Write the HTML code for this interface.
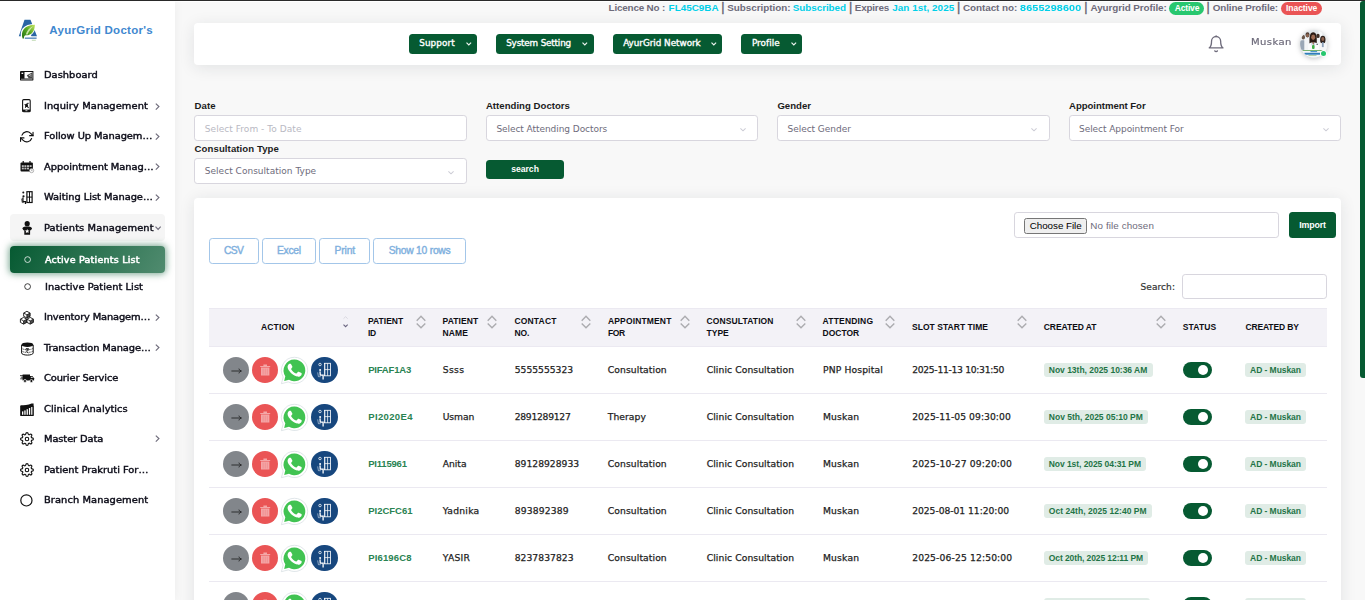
<!DOCTYPE html>
<html lang="en"><head><meta charset="utf-8"><title>Active Patients List - AyurGrid Doctor's</title>
<style>
html,body{margin:0;padding:0}
body{width:1365px;height:600px;overflow:hidden;background:#f8f8f8;font-family:"Liberation Sans",sans-serif;position:relative;color:#222}
#app{position:absolute;left:0;top:0;width:1365px;height:600px;overflow:hidden}
.t{position:absolute;white-space:pre;line-height:1;margin:0;padding:0}
.d{font-family:"DejaVu Sans","Liberation Sans",sans-serif}
.a{position:absolute;box-sizing:border-box}
.card{background:#fff;border-radius:4px;box-shadow:0 2.7px 16px 0 rgba(34,41,47,.1)}
.btn{background:#065a32;border-radius:3.5px}
.inp{background:#fff;border:1px solid #d8d6de;border-radius:3.2px}
.ob{border:1px solid #a3c6e9;border-radius:3.3px;background:#fff}
.hl{height:1px;background:#ebe9f1;left:209px;width:1118px}
.bdg{background:#e0ece6;border-radius:3px;height:13.4px}
.tg{width:29px;height:16px;border-radius:8px;background:#065a32;left:1182.8px}
.tg i{position:absolute;left:15.6px;top:3px;width:10px;height:10px;border-radius:50%;background:#fff}
svg{position:absolute;overflow:visible}
</style></head>
<body><div id="app">
<!-- page chrome -->
<div class="a" style="left:0;top:0;width:1365px;height:1px;background:#2a2a2a"></div>
<div class="a" style="left:0;top:1px;width:1365px;height:1px;background:#fff"></div>

<!-- SIDEBAR -->
<aside class="a" style="left:0;top:1px;width:175px;height:599px;background:#fff;box-shadow:0 0 10px 0 rgba(34,41,47,.05)"></aside>
<div class="a" style="left:10px;top:214px;width:155px;height:27px;background:#f5f5f5;border-radius:4px"></div>
<div class="a" style="left:10px;top:246px;width:155px;height:27px;border-radius:4px;background:linear-gradient(118deg,#065a32,rgba(6,90,50,.7));box-shadow:0 0 7px 1px rgba(6,90,50,.55)"></div>
<svg style="left:17px;top:18px" width="22" height="25" viewBox="17 18 22 25">
<defs><linearGradient id="lg" x1="0.1" y1="0.9" x2="0.95" y2="0.05"><stop offset="0" stop-color="#2c7a16"/><stop offset="0.5" stop-color="#58a825"/><stop offset="1" stop-color="#b9df58"/></linearGradient><filter id="lb"><feGaussianBlur stdDeviation=".25"/></filter></defs>
<g filter="url(#lb)">
<path d="M24.500 19.800H30.500L37 36.200H31.400L27.500 25.200L23.400 36.200H18.800Z" fill="#2a65a4"/>
<path d="M21.600 39C18.600 30 23.500 23.600 35.900 23.900C35.700 31.800 31.800 36.400 26 36.200C24.800 36.200 24.300 37.200 24.500 38.900Z" fill="#fff"/>
<path d="M22.600 38.600C20.300 31 24.400 25 34.900 24.700C34.700 31.300 31.400 35.500 25.900 35.300C24.500 35.300 23.700 36.600 24 38.500Z" fill="url(#lg)"/>
<path d="M25.800 34.600C26.600 30.600 29.300 27.600 33.600 25.900C31 28.300 28.900 31 27.600 34.500Z" fill="#e4f4c4" opacity=".8"/>
<rect x="24.800" y="37.400" width="11.800" height="1.600" fill="#3a74b0" opacity=".75"/>
<rect x="31.800" y="39.800" width="4" height=".8" fill="#6aa84a" opacity=".55"/>
</g></svg>
<svg style="left:20.100px;top:71px" width="13.400" height="9.600" viewBox="0 0 13.400 9.600"><rect x="0" y="0" width="13.400" height="9.600" rx="0.500" fill="#111"/><rect x="4.500" y="1" width="8" height="6.500" fill="#fff"/><path d="M6.800 4.300L12.500 1.200V7.500H8.800Z" fill="#4a4a4a"/><path d="M8.600 4.300L11.400 2.900V5.700Z" fill="#e8e8e8"/><path d="M9.700 4.300L11.400 3.600V5Z" fill="#333"/><rect x="1.500" y="1.700" width="1.700" height="1.300" fill="#fff"/><rect x="1" y="7.700" width="11.500" height="1.100" fill="#8a8a8a"/></svg>
<svg style="left:22.200px;top:99px" width="8.800" height="13.400" viewBox="0 0 8.800 13.400"><rect x="0.600" y="0.600" width="7.600" height="12.200" rx="1.100" fill="#fff" stroke="#111" stroke-width="1.100"/><rect x="0.600" y="10.600" width="7.600" height="2.200" fill="#111"/><rect x="3.400" y="11.400" width="2" height=".7" fill="#fff"/><path d="M2.600 5.400l3.400 1.200M6.400 3.800L4.300 6.400l-1 2.400M4.300 6.400l2.300 2.400M4.400 4.600l.2 1.800" fill="none" stroke="#111" stroke-width="1.050"/><circle cx="4.300" cy="6.600" r="1.150" fill="#111"/></svg>
<svg style="left:20.200px;top:129.800px" width="13.600" height="13.600" viewBox="0 0 24 24" fill="none" stroke="#111" stroke-width="2" stroke-linecap="round" stroke-linejoin="round"><polyline points="23 4 23 10 17 10"/><polyline points="1 20 1 14 7 14"/><path d="M3.510 9a9 9 0 0 1 14.850-3.360L23 10M1 14l4.640 4.360A9 9 0 0 0 20.490 15"/></svg>
<svg style="left:20px;top:161px" width="14" height="12" viewBox="0 0 14 12"><rect x="0.500" y="1.400" width="12.400" height="9.200" rx="1" fill="#111"/><rect x="2.600" y="0" width="1.200" height="2.400" fill="#111"/><rect x="9.400" y="0" width="1.200" height="2.400" fill="#111"/><g fill="#bbb"><rect x="1.800" y="4.200" width="2" height="1.800"/><rect x="4.400" y="4.200" width="2" height="1.800"/><rect x="7" y="4.200" width="2" height="1.800"/><rect x="9.600" y="4.200" width="2" height="1.800"/><rect x="1.800" y="6.600" width="2" height="1.800"/><rect x="4.400" y="6.600" width="2" height="1.800"/><rect x="7" y="6.600" width="2" height="1.800"/></g><circle cx="11.600" cy="9.600" r="2.100" fill="#fff" stroke="#888" stroke-width=".6"/><path d="M11.600 8.400v1.300h.9" fill="none" stroke="#666" stroke-width=".5"/></svg>
<svg style="left:21px;top:190.600px" width="12" height="13.400" viewBox="0 0 12 13.400"><circle cx="2.300" cy="1.500" r="1" fill="#111"/><circle cx="2.500" cy="5.300" r="1.100" fill="#111"/><path d="M1.900 6.600v4h2.600v2.400" fill="none" stroke="#111" stroke-width="1.300"/><path d="M0.400 7.600l.8 4h1.600" fill="none" stroke="#111" stroke-width=".6"/><rect x="5.900" y="0.700" width="5.200" height="10.800" fill="none" stroke="#111" stroke-width="1.200"/><path d="M8.500 0.700v10.800M5.900 6.100h5.200" stroke="#111" stroke-width="1"/></svg>
<svg style="left:22px;top:221px" width="10.400" height="14" viewBox="0 0 10.400 14"><circle cx="5.200" cy="2.700" r="2.600" fill="#111"/><path d="M0.300 7.200C1.500 6 3 5.600 5.200 5.600s3.700.4 4.900 1.600L9 9.200H8.100V13.800H2.300V9.200H1.400Z" fill="#111"/><path d="M5.200 8l.7 1.400 1.500.2-1.100 1 .3 1.500-1.400-.8-1.400.8.300-1.500-1.100-1 1.500-.2z" fill="#fff"/></svg>
<svg style="left:24.300px;top:256.200px" width="7.200" height="7.200" viewBox="0 0 7.200 7.200"><circle cx="3.600" cy="3.600" r="2.900" fill="none" stroke="#fff" stroke-width=".75"/></svg>
<svg style="left:24.300px;top:283.300px" width="7.200" height="7.200" viewBox="0 0 7.200 7.200"><circle cx="3.600" cy="3.600" r="2.900" fill="none" stroke="#111" stroke-width=".8"/></svg>
<svg style="left:20px;top:310.600px" width="14" height="14" viewBox="0 0 14 14"><path d="M3.7 2.06L6.9 0.3L10.100000000000001 2.06V5.292000000000001L6.9 7.0200000000000005L3.7 5.292000000000001Z" fill="#fff" stroke="#111" stroke-width=".9" stroke-linejoin="miter"/><path d="M6.9 3.8200000000000003V7.0200000000000005M3.7 2.06L6.9 3.8200000000000003L10.100000000000001 2.06" fill="none" stroke="#111" stroke-width=".8"/><path d="M6.9 3.8200000000000003L10.100000000000001 2.06V5.292000000000001L6.9 7.0200000000000005Z" fill="#111" opacity=".75"/><path d="M0.4 8.16L3.6 6.4L6.800000000000001 8.16V11.392000000000001L3.6 13.120000000000001L0.4 11.392000000000001Z" fill="#fff" stroke="#111" stroke-width=".9" stroke-linejoin="miter"/><path d="M3.6 9.920000000000002V13.120000000000001M0.4 8.16L3.6 9.920000000000002L6.800000000000001 8.16" fill="none" stroke="#111" stroke-width=".8"/><path d="M3.6 9.920000000000002L6.800000000000001 8.16V11.392000000000001L3.6 13.120000000000001Z" fill="#111" opacity=".75"/><path d="M7 8.16L10.2 6.4L13.4 8.16V11.392000000000001L10.2 13.120000000000001L7 11.392000000000001Z" fill="#fff" stroke="#111" stroke-width=".9" stroke-linejoin="miter"/><path d="M10.2 9.920000000000002V13.120000000000001M7 8.16L10.2 9.920000000000002L13.4 8.16" fill="none" stroke="#111" stroke-width=".8"/><path d="M10.2 9.920000000000002L13.4 8.16V11.392000000000001L10.2 13.120000000000001Z" fill="#111" opacity=".75"/></svg>
<svg style="left:20.600px;top:341.600px" width="12.800" height="13.600" viewBox="0 0 12.800 13.600"><path d="M0.600 3v8c0 1.200 2.600 2.100 5.800 2.100s5.800-.9 5.800-2.100V3" fill="#fff" stroke="#111" stroke-width="1"/><ellipse cx="6.400" cy="2.700" rx="5.900" ry="2.300" fill="#111"/><path d="M0.600 6.200c1 1 3 1.500 5.800 1.500s4.800-.5 5.800-1.500M0.600 8.900c1 1 3 1.500 5.800 1.500s4.800-.5 5.800-1.500" fill="none" stroke="#111" stroke-width=".7" stroke-dasharray="1.200 .6"/><path d="M4.800 6.600h3.200M4.800 7.900h3.200M5.400 6.600c2.200 0 2.200 2.400 0 2.400l2 2.300" fill="none" stroke="#111" stroke-width=".7"/></svg>
<svg style="left:19.800px;top:374px" width="14.400" height="9" viewBox="0 0 14.400 9"><path d="M2.600 0.500h7.400v6h-7.400z" fill="#111"/><path d="M10 2h2.400l1.700 2.300v2.200H10z" fill="#111"/><path d="M0 1.600h3.400M0.800 3.200h2.800M0.200 4.800h3" stroke="#111" stroke-width=".8"/><circle cx="5" cy="7" r="1.500" fill="#111" stroke="#fff" stroke-width=".7"/><circle cx="11.400" cy="7" r="1.500" fill="#111" stroke="#fff" stroke-width=".7"/><path d="M10.800 2.800h1.400l.9 1.300h-2.300z" fill="#ccc"/></svg>
<svg style="left:20px;top:403px" width="14" height="13.200" viewBox="0 0 14 13.200"><path d="M0.400 2.600C4 2.400 8 1.800 11.600 0.400L13.600 0.600V13H0.400Z" fill="#111"/><rect x="0.400" y="2.400" width="13.200" height="10.600" rx="1" fill="#111"/><g fill="#fff"><rect x="2" y="8.400" width="1.300" height="3.400"/><rect x="4.300" y="7.400" width="1.300" height="4.400"/><rect x="6.600" y="6.200" width="1.300" height="5.600"/><rect x="8.900" y="5" width="1.300" height="6.800"/><rect x="11.200" y="4" width="1.200" height="7.800"/></g></svg>
<svg style="left:19.900px;top:432.2px" width="14" height="14" viewBox="0 0 24 24" fill="none" stroke="#111" stroke-width="1.900" stroke-linecap="round" stroke-linejoin="round"><circle cx="12" cy="12" r="3"/><path d="M19.4 15a1.65 1.65 0 0 0 .33 1.82l.06.06a2 2 0 0 1 0 2.83 2 2 0 0 1-2.83 0l-.06-.06a1.65 1.65 0 0 0-1.82-.33 1.65 1.65 0 0 0-1 1.51V21a2 2 0 0 1-2 2 2 2 0 0 1-2-2v-.09A1.65 1.65 0 0 0 9 19.4a1.65 1.65 0 0 0-1.82.33l-.06.06a2 2 0 0 1-2.83 0 2 2 0 0 1 0-2.83l.06-.06a1.65 1.65 0 0 0 .33-1.82 1.65 1.65 0 0 0-1.51-1H3a2 2 0 0 1-2-2 2 2 0 0 1 2-2h.09A1.65 1.65 0 0 0 4.6 9a1.65 1.65 0 0 0-.33-1.82l-.06-.06a2 2 0 0 1 0-2.83 2 2 0 0 1 2.83 0l.06.06a1.65 1.65 0 0 0 1.82.33H9a1.65 1.65 0 0 0 1-1.51V3a2 2 0 0 1 2-2 2 2 0 0 1 2 2v.09a1.65 1.65 0 0 0 1 1.51 1.65 1.65 0 0 0 1.82-.33l.06-.06a2 2 0 0 1 2.83 0 2 2 0 0 1 0 2.83l-.06.06a1.65 1.65 0 0 0-.33 1.820V9a1.65 1.65 0 0 0 1.510 1H21a2 2 0 0 1 2 2 2 2 0 0 1-2 2h-.09a1.65 1.65 0 0 0-1.510 1z"/></svg>
<svg style="left:19.900px;top:463.1px" width="14" height="14" viewBox="0 0 24 24" fill="none" stroke="#111" stroke-width="1.900" stroke-linecap="round" stroke-linejoin="round"><circle cx="12" cy="12" r="3"/><path d="M19.4 15a1.65 1.65 0 0 0 .33 1.82l.06.06a2 2 0 0 1 0 2.83 2 2 0 0 1-2.83 0l-.06-.06a1.65 1.65 0 0 0-1.82-.33 1.65 1.65 0 0 0-1 1.51V21a2 2 0 0 1-2 2 2 2 0 0 1-2-2v-.09A1.65 1.65 0 0 0 9 19.4a1.65 1.65 0 0 0-1.82.33l-.06.06a2 2 0 0 1-2.83 0 2 2 0 0 1 0-2.83l.06-.06a1.65 1.65 0 0 0 .33-1.82 1.65 1.65 0 0 0-1.51-1H3a2 2 0 0 1-2-2 2 2 0 0 1 2-2h.09A1.65 1.65 0 0 0 4.6 9a1.65 1.65 0 0 0-.33-1.82l-.06-.06a2 2 0 0 1 0-2.83 2 2 0 0 1 2.83 0l.06.06a1.65 1.65 0 0 0 1.82.33H9a1.65 1.65 0 0 0 1-1.51V3a2 2 0 0 1 2-2 2 2 0 0 1 2 2v.09a1.65 1.65 0 0 0 1 1.51 1.65 1.65 0 0 0 1.82-.33l.06-.06a2 2 0 0 1 2.83 0 2 2 0 0 1 0 2.83l-.06.06a1.65 1.65 0 0 0-.33 1.820V9a1.65 1.65 0 0 0 1.510 1H21a2 2 0 0 1 2 2 2 2 0 0 1-2 2h-.09a1.65 1.65 0 0 0-1.510 1z"/></svg>
<svg style="left:20.300px;top:494.100px" width="12.800" height="12.800" viewBox="0 0 12.800 12.800"><circle cx="6.400" cy="6.400" r="5.600" fill="none" stroke="#111" stroke-width="1.200"/></svg>
<svg style="left:154.600px;top:102.6px" width="4.600" height="7.200" viewBox="0 0 4.600 7.200"><path d="M0.800 0.600L3.900 3.600L0.800 6.600" fill="none" stroke="#706d7c" stroke-width="1.200"/></svg>
<svg style="left:154.600px;top:132.8px" width="4.600" height="7.200" viewBox="0 0 4.600 7.200"><path d="M0.800 0.600L3.900 3.600L0.800 6.600" fill="none" stroke="#706d7c" stroke-width="1.200"/></svg>
<svg style="left:154.600px;top:163.4px" width="4.600" height="7.200" viewBox="0 0 4.600 7.200"><path d="M0.800 0.600L3.900 3.600L0.800 6.600" fill="none" stroke="#706d7c" stroke-width="1.200"/></svg>
<svg style="left:154.600px;top:193.6px" width="4.600" height="7.200" viewBox="0 0 4.600 7.200"><path d="M0.800 0.600L3.900 3.600L0.800 6.600" fill="none" stroke="#706d7c" stroke-width="1.200"/></svg>
<svg style="left:154.600px;top:313.6px" width="4.600" height="7.200" viewBox="0 0 4.600 7.200"><path d="M0.800 0.600L3.900 3.600L0.800 6.600" fill="none" stroke="#706d7c" stroke-width="1.200"/></svg>
<svg style="left:154.600px;top:344.4px" width="4.600" height="7.200" viewBox="0 0 4.600 7.200"><path d="M0.800 0.600L3.900 3.600L0.800 6.600" fill="none" stroke="#706d7c" stroke-width="1.200"/></svg>
<svg style="left:154.600px;top:435.4px" width="4.600" height="7.200" viewBox="0 0 4.600 7.200"><path d="M0.800 0.600L3.900 3.600L0.800 6.600" fill="none" stroke="#706d7c" stroke-width="1.200"/></svg>
<svg style="left:154.500px;top:225.700px" width="6.200" height="4.200" viewBox="0 0 6.200 4.200"><path d="M0.500 0.700L3.100 3.500L5.700 0.700" fill="none" stroke="#706d7c" stroke-width="1.200"/></svg>

<!-- NAVBAR -->
<header class="a card" style="left:194px;top:23px;width:1147px;height:42px"></header>
<div class="a btn" style="left:409px;top:33.8px;width:68px;height:20.2px"></div>
<div class="a btn" style="left:496.2px;top:33.8px;width:98px;height:20.2px"></div>
<div class="a btn" style="left:613px;top:33.8px;width:108.8px;height:20.2px"></div>
<div class="a btn" style="left:741px;top:33.8px;width:61.1px;height:20.2px"></div>
<svg style="left:466.0px;top:41.800px" width="5.600" height="3.800" viewBox="0 0 5.600 3.800"><path d="M0.500 0.600L2.800 3L5.100 0.600" fill="none" stroke="#eef4f0" stroke-width="1.150"/></svg>
<svg style="left:582.1px;top:41.800px" width="5.600" height="3.800" viewBox="0 0 5.600 3.800"><path d="M0.500 0.600L2.800 3L5.100 0.600" fill="none" stroke="#eef4f0" stroke-width="1.150"/></svg>
<svg style="left:711.0px;top:41.800px" width="5.600" height="3.800" viewBox="0 0 5.600 3.800"><path d="M0.500 0.600L2.800 3L5.100 0.600" fill="none" stroke="#eef4f0" stroke-width="1.150"/></svg>
<svg style="left:790.5px;top:41.800px" width="5.600" height="3.800" viewBox="0 0 5.600 3.800"><path d="M0.500 0.600L2.800 3L5.100 0.600" fill="none" stroke="#eef4f0" stroke-width="1.150"/></svg>
<svg style="left:1207.300px;top:34.800px" width="18.200" height="18.200" viewBox="0 0 24 24" fill="none" stroke="#6e6b7b" stroke-width="1.750" stroke-linecap="round" stroke-linejoin="round"><path d="M18 8A6 6 0 0 0 6 8c0 7-3 9-3 9h18s-3-2-3-9"/><path d="M13.730 21a2 2 0 0 1-3.460 0"/><path d="M12 2V1.200"/></svg>
<svg style="left:1299.500px;top:29.900px;filter:drop-shadow(0 1.500px 2.500px rgba(34,41,47,.28))" width="27.600" height="27.600" viewBox="1299.500 29.900 27.600 27.600">
<defs><clipPath id="av"><circle cx="1313.300" cy="43.600" r="13.700"/></clipPath><filter id="bl"><feGaussianBlur stdDeviation=".55"/></filter></defs>
<g clip-path="url(#av)"><rect x="1299" y="29" width="29" height="29" fill="#eceff1"/>
<g filter="url(#bl)">
<rect x="1299" y="29" width="29" height="8" fill="#dfe5e8"/>
<rect x="1318" y="30" width="4" height="9" fill="#f6f8f9"/>
<!-- far left -->
<ellipse cx="1302.800" cy="37.200" rx="1.700" ry="2.200" fill="#6b5446"/><path d="M1299.500 50V41.500C1300 39.800 1304.600 39.600 1305.400 41.500V50Z" fill="#9aa7b6"/>
<!-- left man -->
<ellipse cx="1307" cy="34.600" rx="2" ry="2.500" fill="#4a382e"/><ellipse cx="1307" cy="35.400" rx="1.500" ry="1.900" fill="#8a6450"/><path d="M1303.800 50V40C1304.600 37.800 1309.800 37.800 1310.400 40V50Z" fill="#f3f5f7"/>
<!-- right-center -->
<ellipse cx="1317.500" cy="35.800" rx="1.700" ry="2.200" fill="#3e2e26"/><path d="M1315.500 50V40.500C1316 38.800 1320 38.800 1320.400 40.500V50Z" fill="#eef1f4"/>
<!-- far right woman -->
<ellipse cx="1322.300" cy="39.600" rx="2.700" ry="3.900" fill="#2f211b"/><ellipse cx="1322.300" cy="38.900" rx="1.500" ry="1.900" fill="#8d6450"/><path d="M1318.800 50V44.500C1319.600 42.400 1325.400 42.400 1326.400 44.500V50Z" fill="#f5f6f8"/><rect x="1321.400" y="42" width="1.800" height="5" fill="#8aa0b8"/>
<!-- center woman -->
<path d="M1309 44C1308.600 36 1309.600 32.200 1312.700 32.200S1316.600 36 1316.200 44Z" fill="#2a1b15"/>
<ellipse cx="1312.700" cy="37.200" rx="2" ry="2.700" fill="#9c6b52"/>
<path d="M1307.600 50.500V45.500C1308.200 42.400 1310.600 42.400 1312.700 42.400S1317.600 42.400 1318.600 45.500V50.500Z" fill="#fbfcfd"/>
<path d="M1311.600 42.200L1312.700 45.400L1313.800 42.200Z" fill="#8a5e48"/>
<path d="M1311.300 43v2.200M1314.100 43v2.200" stroke="#7fb5d9" stroke-width=".5"/>
<rect x="1311.500" y="44.800" width="2.600" height="4" rx="1" fill="#3fae49"/>
<rect x="1316" y="43.600" width="1.400" height="1.300" fill="#5a6670"/>
<!-- banner -->
<rect x="1299" y="49.800" width="29" height="9" fill="#f4f7f9"/>
<rect x="1302" y="49.900" width="20" height=".8" fill="#5aa24e"/>
<rect x="1310" y="51" width="6.600" height="1" fill="#3f8fc8"/>
<rect x="1304" y="52.700" width="15.600" height="1.900" fill="#2f7fb9"/>
<rect x="1308" y="55.200" width="8" height=".7" fill="#6aaa5a" opacity=".7"/>
</g></g></svg>
<div class="a" style="left:1320.600px;top:50.500px;width:5.600px;height:5.600px;border-radius:50%;background:#28c76f;box-shadow:0 0 0 .8px #fff"></div>

<!-- info badges -->
<div class="a" style="left:1169.1px;top:1.6px;width:34.7px;height:13.2px;border-radius:7px;background:#28c76f"></div>
<div class="a" style="left:1281.3px;top:1.6px;width:40.6px;height:13.2px;border-radius:7px;background:#ea5455"></div>

<!-- FILTERS -->
<div class="a inp" style="left:194.2px;top:115.2px;width:272.6px;height:25.4px"></div>
<div class="a inp" style="left:486px;top:115.2px;width:271.8px;height:25.4px"></div>
<div class="a inp" style="left:777.4px;top:115.2px;width:272.3px;height:25.4px"></div>
<div class="a inp" style="left:1069px;top:115.2px;width:271.8px;height:25.4px"></div>
<div class="a inp" style="left:194.2px;top:158.3px;width:272.6px;height:25.4px"></div>
<div class="a btn" style="left:486px;top:160px;width:78.1px;height:18.8px"></div>

<svg style="left:740.0px;top:128.0px" width="6" height="3.400" viewBox="0 0 6 3.400"><path d="M0.400 0.400L3 2.900L5.600 0.400" fill="none" stroke="#cdcdd6" stroke-width="1.050"/></svg>
<svg style="left:1030.7px;top:128.0px" width="6" height="3.400" viewBox="0 0 6 3.400"><path d="M0.400 0.400L3 2.900L5.600 0.400" fill="none" stroke="#cdcdd6" stroke-width="1.050"/></svg>
<svg style="left:1323.0px;top:128.0px" width="6" height="3.400" viewBox="0 0 6 3.400"><path d="M0.400 0.400L3 2.900L5.600 0.400" fill="none" stroke="#cdcdd6" stroke-width="1.050"/></svg>
<svg style="left:448.4px;top:170.7px" width="6" height="3.400" viewBox="0 0 6 3.400"><path d="M0.400 0.400L3 2.900L5.600 0.400" fill="none" stroke="#cdcdd6" stroke-width="1.050"/></svg>

<!-- MAIN CARD -->
<main class="a card" style="left:194px;top:198.2px;width:1147px;height:430px"></main>
<div class="a ob" style="left:209.2px;top:238px;width:49.4px;height:25.8px"></div>
<div class="a ob" style="left:262.1px;top:238px;width:53.9px;height:25.8px"></div>
<div class="a ob" style="left:319px;top:238px;width:50.6px;height:25.8px"></div>
<div class="a ob" style="left:373.1px;top:238px;width:92.8px;height:25.8px"></div>
<div class="a inp" style="left:1014.2px;top:212.3px;width:264.7px;height:25.5px"></div>
<div class="a" style="left:1024px;top:217.5px;width:62.6px;height:16px;background:#efefef;border:1px solid #767676;border-radius:2.5px"></div>
<div class="a btn" style="left:1289px;top:211.8px;width:46.8px;height:26px"></div>
<div class="a inp" style="left:1182px;top:274.1px;width:144.7px;height:24.5px"></div>

<!-- TABLE -->
<div class="a" style="left:209px;top:308px;width:1118px;height:38.8px;background:#f3f2f7;border-top:1px solid #ebe9f1;border-bottom:1px solid #ebe9f1"></div>
<div class="a hl" style="top:393px"></div>
<div class="a hl" style="top:440px"></div>
<div class="a hl" style="top:487px"></div>
<div class="a hl" style="top:534px"></div>
<div class="a hl" style="top:581px"></div>
<div class="a" style="left:0;top:356.8px;width:1365px;height:27px">
<div class="a" style="left:222.9px;top:0.1px;width:26.1px;height:26.1px;border-radius:50%;background:#82868b"></div>
<svg style="left:230.6px;top:10px" width="11" height="8" viewBox="0 0 11 8"><path d="M0.4 4H10.2M7.9 1.6C8.300 2.800 9 3.600 10.400 4C9 4.400 8.300 5.200 7.900 6.400" fill="none" stroke="#0a0a0a" stroke-width="0.7"/></svg>
<div class="a" style="left:252.1px;top:0.1px;width:26px;height:26.1px;border-radius:50%;background:#ea5455"></div>
<svg style="left:260px;top:7.2px" width="10.4" height="11.8" viewBox="0 0 10.4 11.8"><path d="M0.2 1.9h10v1.1h-10zM3.4 0.5h3.6v1.4h-3.6zM1 3.6h8.4v8h-8.4z" fill="#f4a6a7"/><path d="M3.1 4.6v6M5.2 4.6v6M7.3 4.6v6" stroke="#ef8586" stroke-width="0.7"/></svg>
<svg style="left:280.6px;top:0px" width="27" height="27" viewBox="0 0 27 27"><path d="M13.5 0.3A13.1 13.1 0 0 0 2.2 20L0.4 26.7L7.3 24.9A13.1 13.1 0 1 0 13.5 0.3Z" fill="#fff" stroke="#d3dbdf" stroke-width="0.7"/><path d="M13.5 2.6A10.8 10.8 0 0 0 4.3 19.2L3.2 23.9L8 22.7A10.8 10.8 0 1 0 13.5 2.6Z" fill="#41c352"/><path d="M9.7 7.2c-.3-.6-.5-.6-.8-.6h-.7c-.3 0-.7.1-1 .5-.4.4-1.300 1.300-1.300 3.100s1.300 3.600 1.500 3.800c.2.200 2.600 4.100 6.400 5.600 3.100 1.200 3.800 1 4.500.9.700-.1 2.200-.9 2.500-1.800.3-.9.300-1.600.2-1.800-.1-.2-.3-.3-.7-.5l-2.500-1.200c-.4-.1-.6-.2-.9.200-.2.400-1 1.200-1.200 1.500-.2.200-.4.300-.8.100-.4-.2-1.600-.6-3-1.900-1.100-1-1.900-2.200-2.100-2.600-.2-.4 0-.6.200-.8l.600-.7c.2-.2.200-.4.400-.6.100-.3 0-.5 0-.7z" fill="#fff" transform="translate(1.1 .6) scale(.93)"/></svg>
<div class="a" style="left:311.2px;top:0px;width:26.5px;height:26.5px;border-radius:50%;background:#17477e"></div>
<svg style="left:316.5px;top:6.2px" width="15" height="17" viewBox="0 0 15 17"><circle cx="3" cy="1.500" r="1.250" fill="none" stroke="#fff" stroke-width="0.750"/><circle cx="3.100" cy="7" r="1" fill="#fff"/><path d="M3 8.400L3.300 12.200H6.100V16.500" fill="none" stroke="#fff" stroke-width="1.300"/><path d="M0.700 9.400L1.400 13.700H3.800" fill="none" stroke="#fff" stroke-width="0.600" opacity=".85"/><rect x="7.500" y="0.300" width="5.900" height="12.500" fill="none" stroke="#fff" stroke-width="0.850"/><path d="M8.300 0.300v12.500" stroke="#fff" stroke-width="0.500" opacity=".7"/><path d="M10.600 0.300v12.500M7.500 6.600h5.900" stroke="#fff" stroke-width="0.750"/></svg>
<div class="a bdg" style="left:1044px;top:6.5px;width:108.7px"></div>
<div class="a bdg" style="left:1245.2px;top:6.5px;width:60.6px"></div>
<div class="a tg" style="top:5px"><i></i></div>
</div>
<div class="a" style="left:0;top:403.8px;width:1365px;height:27px">
<div class="a" style="left:222.9px;top:0.1px;width:26.1px;height:26.1px;border-radius:50%;background:#82868b"></div>
<svg style="left:230.6px;top:10px" width="11" height="8" viewBox="0 0 11 8"><path d="M0.4 4H10.2M7.9 1.6C8.300 2.800 9 3.600 10.400 4C9 4.400 8.300 5.200 7.900 6.400" fill="none" stroke="#0a0a0a" stroke-width="0.7"/></svg>
<div class="a" style="left:252.1px;top:0.1px;width:26px;height:26.1px;border-radius:50%;background:#ea5455"></div>
<svg style="left:260px;top:7.2px" width="10.4" height="11.8" viewBox="0 0 10.4 11.8"><path d="M0.2 1.9h10v1.1h-10zM3.4 0.5h3.6v1.4h-3.6zM1 3.6h8.4v8h-8.4z" fill="#f4a6a7"/><path d="M3.1 4.6v6M5.2 4.6v6M7.3 4.6v6" stroke="#ef8586" stroke-width="0.7"/></svg>
<svg style="left:280.6px;top:0px" width="27" height="27" viewBox="0 0 27 27"><path d="M13.5 0.3A13.1 13.1 0 0 0 2.2 20L0.4 26.7L7.3 24.9A13.1 13.1 0 1 0 13.5 0.3Z" fill="#fff" stroke="#d3dbdf" stroke-width="0.7"/><path d="M13.5 2.6A10.8 10.8 0 0 0 4.3 19.2L3.2 23.9L8 22.7A10.8 10.8 0 1 0 13.5 2.6Z" fill="#41c352"/><path d="M9.7 7.2c-.3-.6-.5-.6-.8-.6h-.7c-.3 0-.7.1-1 .5-.4.4-1.300 1.300-1.300 3.100s1.300 3.600 1.500 3.800c.2.200 2.600 4.100 6.400 5.600 3.100 1.200 3.800 1 4.500.9.700-.1 2.200-.9 2.500-1.800.3-.9.300-1.600.2-1.800-.1-.2-.3-.3-.7-.5l-2.500-1.200c-.4-.1-.6-.2-.9.200-.2.400-1 1.200-1.200 1.500-.2.200-.4.300-.8.100-.4-.2-1.600-.6-3-1.900-1.100-1-1.900-2.200-2.100-2.600-.2-.4 0-.6.200-.8l.600-.7c.2-.2.200-.4.400-.6.100-.3 0-.5 0-.7z" fill="#fff" transform="translate(1.1 .6) scale(.93)"/></svg>
<div class="a" style="left:311.2px;top:0px;width:26.5px;height:26.5px;border-radius:50%;background:#17477e"></div>
<svg style="left:316.5px;top:6.2px" width="15" height="17" viewBox="0 0 15 17"><circle cx="3" cy="1.500" r="1.250" fill="none" stroke="#fff" stroke-width="0.750"/><circle cx="3.100" cy="7" r="1" fill="#fff"/><path d="M3 8.400L3.300 12.200H6.100V16.500" fill="none" stroke="#fff" stroke-width="1.300"/><path d="M0.700 9.400L1.400 13.700H3.800" fill="none" stroke="#fff" stroke-width="0.600" opacity=".85"/><rect x="7.500" y="0.300" width="5.900" height="12.500" fill="none" stroke="#fff" stroke-width="0.850"/><path d="M8.300 0.300v12.500" stroke="#fff" stroke-width="0.500" opacity=".7"/><path d="M10.600 0.300v12.500M7.500 6.600h5.900" stroke="#fff" stroke-width="0.750"/></svg>
<div class="a bdg" style="left:1044px;top:6.5px;width:103.8px"></div>
<div class="a bdg" style="left:1245.2px;top:6.5px;width:60.6px"></div>
<div class="a tg" style="top:5px"><i></i></div>
</div>
<div class="a" style="left:0;top:450.8px;width:1365px;height:27px">
<div class="a" style="left:222.9px;top:0.1px;width:26.1px;height:26.1px;border-radius:50%;background:#82868b"></div>
<svg style="left:230.6px;top:10px" width="11" height="8" viewBox="0 0 11 8"><path d="M0.4 4H10.2M7.9 1.6C8.300 2.800 9 3.600 10.400 4C9 4.400 8.300 5.200 7.900 6.400" fill="none" stroke="#0a0a0a" stroke-width="0.7"/></svg>
<div class="a" style="left:252.1px;top:0.1px;width:26px;height:26.1px;border-radius:50%;background:#ea5455"></div>
<svg style="left:260px;top:7.2px" width="10.4" height="11.8" viewBox="0 0 10.4 11.8"><path d="M0.2 1.9h10v1.1h-10zM3.4 0.5h3.6v1.4h-3.6zM1 3.6h8.4v8h-8.4z" fill="#f4a6a7"/><path d="M3.1 4.6v6M5.2 4.6v6M7.3 4.6v6" stroke="#ef8586" stroke-width="0.7"/></svg>
<svg style="left:280.6px;top:0px" width="27" height="27" viewBox="0 0 27 27"><path d="M13.5 0.3A13.1 13.1 0 0 0 2.2 20L0.4 26.7L7.3 24.9A13.1 13.1 0 1 0 13.5 0.3Z" fill="#fff" stroke="#d3dbdf" stroke-width="0.7"/><path d="M13.5 2.6A10.8 10.8 0 0 0 4.3 19.2L3.2 23.9L8 22.7A10.8 10.8 0 1 0 13.5 2.6Z" fill="#41c352"/><path d="M9.7 7.2c-.3-.6-.5-.6-.8-.6h-.7c-.3 0-.7.1-1 .5-.4.4-1.300 1.300-1.300 3.100s1.300 3.600 1.500 3.800c.2.200 2.600 4.100 6.400 5.600 3.100 1.200 3.800 1 4.500.9.700-.1 2.200-.9 2.500-1.800.3-.9.300-1.600.2-1.800-.1-.2-.3-.3-.7-.5l-2.500-1.200c-.4-.1-.6-.2-.9.200-.2.400-1 1.200-1.200 1.500-.2.200-.4.300-.8.100-.4-.2-1.600-.6-3-1.900-1.100-1-1.900-2.200-2.100-2.600-.2-.4 0-.6.200-.8l.600-.7c.2-.2.200-.4.400-.6.100-.3 0-.5 0-.7z" fill="#fff" transform="translate(1.1 .6) scale(.93)"/></svg>
<div class="a" style="left:311.2px;top:0px;width:26.5px;height:26.5px;border-radius:50%;background:#17477e"></div>
<svg style="left:316.5px;top:6.2px" width="15" height="17" viewBox="0 0 15 17"><circle cx="3" cy="1.500" r="1.250" fill="none" stroke="#fff" stroke-width="0.750"/><circle cx="3.100" cy="7" r="1" fill="#fff"/><path d="M3 8.400L3.300 12.200H6.100V16.500" fill="none" stroke="#fff" stroke-width="1.300"/><path d="M0.700 9.400L1.400 13.700H3.800" fill="none" stroke="#fff" stroke-width="0.600" opacity=".85"/><rect x="7.500" y="0.300" width="5.900" height="12.500" fill="none" stroke="#fff" stroke-width="0.850"/><path d="M8.300 0.300v12.500" stroke="#fff" stroke-width="0.500" opacity=".7"/><path d="M10.600 0.300v12.500M7.500 6.600h5.900" stroke="#fff" stroke-width="0.750"/></svg>
<div class="a bdg" style="left:1044px;top:6.5px;width:101.8px"></div>
<div class="a bdg" style="left:1245.2px;top:6.5px;width:60.6px"></div>
<div class="a tg" style="top:5px"><i></i></div>
</div>
<div class="a" style="left:0;top:497.8px;width:1365px;height:27px">
<div class="a" style="left:222.9px;top:0.1px;width:26.1px;height:26.1px;border-radius:50%;background:#82868b"></div>
<svg style="left:230.6px;top:10px" width="11" height="8" viewBox="0 0 11 8"><path d="M0.4 4H10.2M7.9 1.6C8.300 2.800 9 3.600 10.400 4C9 4.400 8.300 5.200 7.900 6.400" fill="none" stroke="#0a0a0a" stroke-width="0.7"/></svg>
<div class="a" style="left:252.1px;top:0.1px;width:26px;height:26.1px;border-radius:50%;background:#ea5455"></div>
<svg style="left:260px;top:7.2px" width="10.4" height="11.8" viewBox="0 0 10.4 11.8"><path d="M0.2 1.9h10v1.1h-10zM3.4 0.5h3.6v1.4h-3.6zM1 3.6h8.4v8h-8.4z" fill="#f4a6a7"/><path d="M3.1 4.6v6M5.2 4.6v6M7.3 4.6v6" stroke="#ef8586" stroke-width="0.7"/></svg>
<svg style="left:280.6px;top:0px" width="27" height="27" viewBox="0 0 27 27"><path d="M13.5 0.3A13.1 13.1 0 0 0 2.2 20L0.4 26.7L7.3 24.9A13.1 13.1 0 1 0 13.5 0.3Z" fill="#fff" stroke="#d3dbdf" stroke-width="0.7"/><path d="M13.5 2.6A10.8 10.8 0 0 0 4.3 19.2L3.2 23.9L8 22.7A10.8 10.8 0 1 0 13.5 2.6Z" fill="#41c352"/><path d="M9.7 7.2c-.3-.6-.5-.6-.8-.6h-.7c-.3 0-.7.1-1 .5-.4.4-1.300 1.300-1.300 3.100s1.300 3.600 1.500 3.800c.2.200 2.600 4.100 6.400 5.600 3.100 1.200 3.800 1 4.500.9.700-.1 2.200-.9 2.500-1.800.3-.9.300-1.600.2-1.800-.1-.2-.3-.3-.7-.5l-2.500-1.200c-.4-.1-.6-.2-.9.200-.2.400-1 1.200-1.200 1.500-.2.200-.4.300-.8.100-.4-.2-1.600-.6-3-1.900-1.100-1-1.900-2.200-2.100-2.600-.2-.4 0-.6.200-.8l.600-.7c.2-.2.200-.4.400-.6.100-.3 0-.5 0-.7z" fill="#fff" transform="translate(1.1 .6) scale(.93)"/></svg>
<div class="a" style="left:311.2px;top:0px;width:26.5px;height:26.5px;border-radius:50%;background:#17477e"></div>
<svg style="left:316.5px;top:6.2px" width="15" height="17" viewBox="0 0 15 17"><circle cx="3" cy="1.500" r="1.250" fill="none" stroke="#fff" stroke-width="0.750"/><circle cx="3.100" cy="7" r="1" fill="#fff"/><path d="M3 8.400L3.300 12.200H6.100V16.500" fill="none" stroke="#fff" stroke-width="1.300"/><path d="M0.700 9.400L1.400 13.700H3.800" fill="none" stroke="#fff" stroke-width="0.600" opacity=".85"/><rect x="7.500" y="0.300" width="5.900" height="12.500" fill="none" stroke="#fff" stroke-width="0.850"/><path d="M8.300 0.300v12.500" stroke="#fff" stroke-width="0.500" opacity=".7"/><path d="M10.600 0.300v12.500M7.500 6.600h5.900" stroke="#fff" stroke-width="0.750"/></svg>
<div class="a bdg" style="left:1044px;top:6.5px;width:107.8px"></div>
<div class="a bdg" style="left:1245.2px;top:6.5px;width:60.6px"></div>
<div class="a tg" style="top:5px"><i></i></div>
</div>
<div class="a" style="left:0;top:544.8px;width:1365px;height:27px">
<div class="a" style="left:222.9px;top:0.1px;width:26.1px;height:26.1px;border-radius:50%;background:#82868b"></div>
<svg style="left:230.6px;top:10px" width="11" height="8" viewBox="0 0 11 8"><path d="M0.4 4H10.2M7.9 1.6C8.300 2.800 9 3.600 10.400 4C9 4.400 8.300 5.200 7.900 6.400" fill="none" stroke="#0a0a0a" stroke-width="0.7"/></svg>
<div class="a" style="left:252.1px;top:0.1px;width:26px;height:26.1px;border-radius:50%;background:#ea5455"></div>
<svg style="left:260px;top:7.2px" width="10.4" height="11.8" viewBox="0 0 10.4 11.8"><path d="M0.2 1.9h10v1.1h-10zM3.4 0.5h3.6v1.4h-3.6zM1 3.6h8.4v8h-8.4z" fill="#f4a6a7"/><path d="M3.1 4.6v6M5.2 4.6v6M7.3 4.6v6" stroke="#ef8586" stroke-width="0.7"/></svg>
<svg style="left:280.6px;top:0px" width="27" height="27" viewBox="0 0 27 27"><path d="M13.5 0.3A13.1 13.1 0 0 0 2.2 20L0.4 26.7L7.3 24.9A13.1 13.1 0 1 0 13.5 0.3Z" fill="#fff" stroke="#d3dbdf" stroke-width="0.7"/><path d="M13.5 2.6A10.8 10.8 0 0 0 4.3 19.2L3.2 23.9L8 22.7A10.8 10.8 0 1 0 13.5 2.6Z" fill="#41c352"/><path d="M9.7 7.2c-.3-.6-.5-.6-.8-.6h-.7c-.3 0-.7.1-1 .5-.4.4-1.300 1.300-1.300 3.100s1.300 3.600 1.500 3.800c.2.200 2.600 4.100 6.400 5.600 3.100 1.200 3.800 1 4.500.9.700-.1 2.200-.9 2.500-1.800.3-.9.300-1.600.2-1.800-.1-.2-.3-.3-.7-.5l-2.500-1.200c-.4-.1-.6-.2-.9.200-.2.400-1 1.200-1.200 1.500-.2.200-.4.300-.8.100-.4-.2-1.600-.6-3-1.900-1.100-1-1.900-2.200-2.100-2.600-.2-.4 0-.6.200-.8l.600-.7c.2-.2.200-.4.400-.6.100-.3 0-.5 0-.7z" fill="#fff" transform="translate(1.1 .6) scale(.93)"/></svg>
<div class="a" style="left:311.2px;top:0px;width:26.5px;height:26.5px;border-radius:50%;background:#17477e"></div>
<svg style="left:316.5px;top:6.2px" width="15" height="17" viewBox="0 0 15 17"><circle cx="3" cy="1.500" r="1.250" fill="none" stroke="#fff" stroke-width="0.750"/><circle cx="3.100" cy="7" r="1" fill="#fff"/><path d="M3 8.400L3.300 12.200H6.100V16.500" fill="none" stroke="#fff" stroke-width="1.300"/><path d="M0.700 9.400L1.400 13.700H3.800" fill="none" stroke="#fff" stroke-width="0.600" opacity=".85"/><rect x="7.500" y="0.300" width="5.900" height="12.500" fill="none" stroke="#fff" stroke-width="0.850"/><path d="M8.300 0.300v12.500" stroke="#fff" stroke-width="0.500" opacity=".7"/><path d="M10.600 0.300v12.500M7.500 6.600h5.900" stroke="#fff" stroke-width="0.750"/></svg>
<div class="a bdg" style="left:1044px;top:6.5px;width:103.8px"></div>
<div class="a bdg" style="left:1245.2px;top:6.5px;width:60.6px"></div>
<div class="a tg" style="top:5px"><i></i></div>
</div>
<div class="a" style="left:0;top:591.8px;width:1365px;height:27px">
<div class="a" style="left:222.9px;top:0.1px;width:26.1px;height:26.1px;border-radius:50%;background:#82868b"></div>
<svg style="left:230.6px;top:10px" width="11" height="8" viewBox="0 0 11 8"><path d="M0.4 4H10.2M7.9 1.6C8.300 2.800 9 3.600 10.400 4C9 4.400 8.300 5.200 7.900 6.400" fill="none" stroke="#0a0a0a" stroke-width="0.7"/></svg>
<div class="a" style="left:252.1px;top:0.1px;width:26px;height:26.1px;border-radius:50%;background:#ea5455"></div>
<svg style="left:260px;top:7.2px" width="10.4" height="11.8" viewBox="0 0 10.4 11.8"><path d="M0.2 1.9h10v1.1h-10zM3.4 0.5h3.6v1.4h-3.6zM1 3.6h8.4v8h-8.4z" fill="#f4a6a7"/><path d="M3.1 4.6v6M5.2 4.6v6M7.3 4.6v6" stroke="#ef8586" stroke-width="0.7"/></svg>
<svg style="left:280.6px;top:0px" width="27" height="27" viewBox="0 0 27 27"><path d="M13.5 0.3A13.1 13.1 0 0 0 2.2 20L0.4 26.7L7.3 24.9A13.1 13.1 0 1 0 13.5 0.3Z" fill="#fff" stroke="#d3dbdf" stroke-width="0.7"/><path d="M13.5 2.6A10.8 10.8 0 0 0 4.3 19.2L3.2 23.9L8 22.7A10.8 10.8 0 1 0 13.5 2.6Z" fill="#41c352"/><path d="M9.7 7.2c-.3-.6-.5-.6-.8-.6h-.7c-.3 0-.7.1-1 .5-.4.4-1.300 1.300-1.300 3.100s1.300 3.600 1.500 3.800c.2.200 2.600 4.100 6.400 5.600 3.100 1.200 3.800 1 4.500.9.700-.1 2.200-.9 2.500-1.800.3-.9.300-1.600.2-1.800-.1-.2-.3-.3-.7-.5l-2.500-1.200c-.4-.1-.6-.2-.9.200-.2.400-1 1.200-1.200 1.500-.2.200-.4.300-.8.100-.4-.2-1.600-.6-3-1.900-1.100-1-1.900-2.200-2.100-2.600-.2-.4 0-.6.200-.8l.600-.7c.2-.2.200-.4.400-.6.100-.3 0-.5 0-.7z" fill="#fff" transform="translate(1.1 .6) scale(.93)"/></svg>
<div class="a" style="left:311.2px;top:0px;width:26.5px;height:26.5px;border-radius:50%;background:#17477e"></div>
<svg style="left:316.5px;top:6.2px" width="15" height="17" viewBox="0 0 15 17"><circle cx="3" cy="1.500" r="1.250" fill="none" stroke="#fff" stroke-width="0.750"/><circle cx="3.100" cy="7" r="1" fill="#fff"/><path d="M3 8.400L3.300 12.200H6.100V16.500" fill="none" stroke="#fff" stroke-width="1.300"/><path d="M0.700 9.400L1.400 13.700H3.800" fill="none" stroke="#fff" stroke-width="0.600" opacity=".85"/><rect x="7.500" y="0.300" width="5.900" height="12.500" fill="none" stroke="#fff" stroke-width="0.850"/><path d="M8.300 0.300v12.500" stroke="#fff" stroke-width="0.500" opacity=".7"/><path d="M10.600 0.300v12.500M7.500 6.600h5.900" stroke="#fff" stroke-width="0.750"/></svg>
<div class="a bdg" style="left:1044px;top:6.5px;width:106px"></div>
<div class="a bdg" style="left:1245.2px;top:6.5px;width:60.6px"></div>
<div class="a tg" style="top:5px"><i></i></div>
</div>
<svg style="left:416.1px;top:315.300px" width="10" height="14" viewBox="0 0 10 14"><path d="M0.700 5.700L5 1.300L9.300 5.700M0.700 8.400L5 12.800L9.300 8.400" fill="none" stroke="#acacb0" stroke-width="1.400"/></svg>
<svg style="left:487.4px;top:315.300px" width="10" height="14" viewBox="0 0 10 14"><path d="M0.700 5.700L5 1.300L9.300 5.700M0.700 8.400L5 12.800L9.300 8.400" fill="none" stroke="#acacb0" stroke-width="1.400"/></svg>
<svg style="left:581.0px;top:315.300px" width="10" height="14" viewBox="0 0 10 14"><path d="M0.700 5.700L5 1.300L9.300 5.700M0.700 8.400L5 12.800L9.300 8.400" fill="none" stroke="#acacb0" stroke-width="1.400"/></svg>
<svg style="left:679.5px;top:315.300px" width="10" height="14" viewBox="0 0 10 14"><path d="M0.700 5.700L5 1.300L9.300 5.700M0.700 8.400L5 12.800L9.300 8.400" fill="none" stroke="#acacb0" stroke-width="1.400"/></svg>
<svg style="left:796.0px;top:315.300px" width="10" height="14" viewBox="0 0 10 14"><path d="M0.700 5.700L5 1.300L9.300 5.700M0.700 8.400L5 12.800L9.300 8.400" fill="none" stroke="#acacb0" stroke-width="1.400"/></svg>
<svg style="left:885.0px;top:315.300px" width="10" height="14" viewBox="0 0 10 14"><path d="M0.700 5.700L5 1.300L9.300 5.700M0.700 8.400L5 12.800L9.300 8.400" fill="none" stroke="#acacb0" stroke-width="1.400"/></svg>
<svg style="left:1016.7px;top:315.300px" width="10" height="14" viewBox="0 0 10 14"><path d="M0.700 5.700L5 1.300L9.300 5.700M0.700 8.400L5 12.800L9.300 8.400" fill="none" stroke="#acacb0" stroke-width="1.400"/></svg>
<svg style="left:1155.8px;top:315.300px" width="10" height="14" viewBox="0 0 10 14"><path d="M0.700 5.700L5 1.300L9.300 5.700M0.700 8.400L5 12.800L9.300 8.400" fill="none" stroke="#acacb0" stroke-width="1.400"/></svg>
<svg style="left:343.400px;top:316.400px" width="5.200" height="11.600" viewBox="0 0 5.200 11.600"><path d="M0.500 2.700L2.600 0.700L4.700 2.700" fill="none" stroke="#d6d5dd" stroke-width="0.900"/><path d="M0.500 8.600L2.600 10.700L4.700 8.600" fill="none" stroke="#6a6580" stroke-width="1.100"/></svg>

<!-- scrollbar -->
<div class="a" style="left:1360px;top:1px;width:5px;height:377px;background:#065a32;border-radius:3px 0 0 3px"></div>

<nav aria-label="Main menu">
<span class="t" style="left:49.3px;top:25.0px;font-size:11.5px;font-weight:700;color:#3f88cf;letter-spacing:0.288px;">AyurGrid Doctor&#x27;s</span>
<span class="t d" style="left:44.3px;top:71.0px;font-size:8.8px;color:#0e0e1a;letter-spacing:0.024px;transform:scaleX(1.12);transform-origin:0 50%;-webkit-text-stroke:0.4px currentColor;">Dashboard</span>
<span class="t d" style="left:44.3px;top:102.0px;font-size:8.8px;color:#0e0e1a;letter-spacing:0.084px;transform:scaleX(1.12);transform-origin:0 50%;-webkit-text-stroke:0.4px currentColor;">Inquiry Management</span>
<span class="t d" style="left:44.3px;top:132.0px;font-size:8.8px;color:#0e0e1a;letter-spacing:-0.051px;transform:scaleX(1.12);transform-origin:0 50%;-webkit-text-stroke:0.4px currentColor;">Follow Up Managem…</span>
<span class="t d" style="left:44.3px;top:163.0px;font-size:8.8px;color:#0e0e1a;letter-spacing:-0.013px;transform:scaleX(1.12);transform-origin:0 50%;-webkit-text-stroke:0.4px currentColor;">Appointment Manag…</span>
<span class="t d" style="left:44.3px;top:193.0px;font-size:8.8px;color:#0e0e1a;letter-spacing:-0.034px;transform:scaleX(1.12);transform-origin:0 50%;-webkit-text-stroke:0.4px currentColor;">Waiting List Manage…</span>
<span class="t d" style="left:44.3px;top:224.0px;font-size:8.8px;color:#0e0e1a;letter-spacing:0.104px;transform:scaleX(1.12);transform-origin:0 50%;-webkit-text-stroke:0.4px currentColor;">Patients Management</span>
<span class="t d" style="left:44.3px;top:313.0px;font-size:8.8px;color:#0e0e1a;letter-spacing:-0.128px;transform:scaleX(1.12);transform-origin:0 50%;-webkit-text-stroke:0.4px currentColor;">Inventory Managem…</span>
<span class="t d" style="left:44.3px;top:344.0px;font-size:8.8px;color:#0e0e1a;letter-spacing:-0.085px;transform:scaleX(1.12);transform-origin:0 50%;-webkit-text-stroke:0.4px currentColor;">Transaction Manage…</span>
<span class="t d" style="left:44.3px;top:374.0px;font-size:8.8px;color:#0e0e1a;letter-spacing:-0.083px;transform:scaleX(1.12);transform-origin:0 50%;-webkit-text-stroke:0.4px currentColor;">Courier Service</span>
<span class="t d" style="left:44.3px;top:405.0px;font-size:8.8px;color:#0e0e1a;letter-spacing:0.015px;transform:scaleX(1.12);transform-origin:0 50%;-webkit-text-stroke:0.4px currentColor;">Clinical Analytics</span>
<span class="t d" style="left:44.3px;top:435.0px;font-size:8.8px;color:#0e0e1a;letter-spacing:-0.090px;transform:scaleX(1.12);transform-origin:0 50%;-webkit-text-stroke:0.4px currentColor;">Master Data</span>
<span class="t d" style="left:44.3px;top:466.0px;font-size:8.8px;color:#0e0e1a;transform:scaleX(1.12);transform-origin:0 50%;-webkit-text-stroke:0.4px currentColor;">Patient Prakruti For…</span>
<span class="t d" style="left:44.3px;top:496.0px;font-size:8.8px;color:#0e0e1a;letter-spacing:0.074px;transform:scaleX(1.12);transform-origin:0 50%;-webkit-text-stroke:0.4px currentColor;">Branch Management</span>
<span class="t d" style="left:45.0px;top:256.0px;font-size:8.8px;color:#fff;letter-spacing:0.214px;transform:scaleX(1.08);transform-origin:0 50%;-webkit-text-stroke:0.5px currentColor;">Active Patients List</span>
<span class="t d" style="left:45.0px;top:283.0px;font-size:8.8px;color:#0e0e1a;letter-spacing:0.047px;transform:scaleX(1.12);transform-origin:0 50%;-webkit-text-stroke:0.4px currentColor;">Inactive Patient List</span>
</nav>
<div role="status" aria-label="Licence information">
<span class="t" style="left:608.6px;top:3.0px;font-size:9.9px;font-weight:700;color:#6e6b7b;letter-spacing:-0.193px;">Licence No :</span>
<span class="t" style="left:668.6px;top:3.0px;font-size:9.9px;font-weight:700;color:#00cfe8;">FL45C9BA</span>
<span class="t" style="left:727.2px;top:3.0px;font-size:9.9px;font-weight:700;color:#6e6b7b;letter-spacing:-0.026px;">Subscription:</span>
<span class="t" style="left:792.8px;top:3.0px;font-size:9.9px;font-weight:700;color:#00cfe8;letter-spacing:-0.058px;">Subscribed</span>
<span class="t" style="left:854.8px;top:3.0px;font-size:9.9px;font-weight:700;color:#6e6b7b;letter-spacing:-0.212px;">Expires</span>
<span class="t" style="left:892.3px;top:3.0px;font-size:9.9px;font-weight:700;color:#00cfe8;letter-spacing:0.031px;">Jan 1st, 2025</span>
<span class="t" style="left:963.0px;top:3.0px;font-size:9.9px;font-weight:700;color:#6e6b7b;letter-spacing:-0.060px;">Contact no:</span>
<span class="t" style="left:1020.0px;top:3.0px;font-size:9.9px;font-weight:700;color:#00cfe8;letter-spacing:0.090px;transform:scaleX(1.1);transform-origin:0 50%;">8655298600</span>
<span class="t" style="left:1090.5px;top:3.0px;font-size:9.9px;font-weight:700;color:#6e6b7b;letter-spacing:-0.079px;">Ayurgrid Profile:</span>
<span class="t" style="left:1212.8px;top:3.0px;font-size:9.9px;font-weight:700;color:#6e6b7b;letter-spacing:-0.153px;">Online Profile:</span>
<span class="t" style="left:721.3px;top:1.0px;font-size:12.5px;color:#64616f;-webkit-text-stroke:0.35px currentColor;">|</span>
<span class="t" style="left:848.9px;top:1.0px;font-size:12.5px;color:#64616f;-webkit-text-stroke:0.35px currentColor;">|</span>
<span class="t" style="left:957.0px;top:1.0px;font-size:12.5px;color:#64616f;-webkit-text-stroke:0.35px currentColor;">|</span>
<span class="t" style="left:1084.2px;top:1.0px;font-size:12.5px;color:#64616f;-webkit-text-stroke:0.35px currentColor;">|</span>
<span class="t" style="left:1206.6px;top:1.0px;font-size:12.5px;color:#64616f;-webkit-text-stroke:0.35px currentColor;">|</span>
<span class="t" style="left:1174.7px;top:4.0px;font-size:8.5px;font-weight:700;color:#fff;letter-spacing:-0.169px;">Active</span>
<span class="t" style="left:1286.0px;top:4.0px;font-size:8.5px;font-weight:700;color:#fff;letter-spacing:-0.045px;">Inactive</span>
</div>
<nav aria-label="Top navigation">
<span class="t d" style="left:419.2px;top:39.0px;font-size:8.8px;color:#fff;letter-spacing:0.117px;-webkit-text-stroke:0.35px currentColor;">Support</span>
<span class="t d" style="left:506.2px;top:39.0px;font-size:8.8px;color:#fff;letter-spacing:-0.165px;-webkit-text-stroke:0.35px currentColor;">System Setting</span>
<span class="t d" style="left:623.2px;top:39.0px;font-size:8.8px;color:#fff;letter-spacing:-0.020px;-webkit-text-stroke:0.35px currentColor;">AyurGrid Network</span>
<span class="t d" style="left:751.9px;top:39.0px;font-size:8.8px;color:#fff;letter-spacing:0.049px;-webkit-text-stroke:0.35px currentColor;">Profile</span>
<span class="t d" style="left:1250.9px;top:37.0px;font-size:9.3px;color:#6e6b7b;letter-spacing:0.382px;transform:scaleX(1.08);transform-origin:0 50%;-webkit-text-stroke:0.2px currentColor;">Muskan</span>
</nav>
<form aria-label="Filters" onsubmit="return false">
<span class="t" style="left:194.6px;top:101.0px;font-size:9.6px;font-weight:700;color:#1c1c1c;letter-spacing:0.026px;">Date</span>
<span class="t" style="left:485.9px;top:101.0px;font-size:9.6px;font-weight:700;color:#1c1c1c;letter-spacing:0.024px;">Attending Doctors</span>
<span class="t" style="left:777.4px;top:101.0px;font-size:9.6px;font-weight:700;color:#1c1c1c;">Gender</span>
<span class="t" style="left:1069.0px;top:101.0px;font-size:9.6px;font-weight:700;color:#1c1c1c;letter-spacing:-0.045px;">Appointment For</span>
<span class="t" style="left:194.6px;top:144.0px;font-size:9.6px;font-weight:700;color:#1c1c1c;letter-spacing:0.084px;">Consultation Type</span>
<span class="t d" style="left:204.8px;top:125.0px;font-size:9.0px;color:#b9b9c3;letter-spacing:0.045px;">Select From - To Date</span>
<span class="t d" style="left:496.4px;top:125.0px;font-size:9.0px;color:#6e6b7b;letter-spacing:-0.060px;">Select Attending Doctors</span>
<span class="t d" style="left:787.5px;top:125.0px;font-size:9.0px;color:#6e6b7b;letter-spacing:-0.038px;">Select Gender</span>
<span class="t d" style="left:1079.0px;top:125.0px;font-size:9.0px;color:#6e6b7b;letter-spacing:-0.056px;">Select Appointment For</span>
<span class="t d" style="left:204.8px;top:167.0px;font-size:9.0px;color:#6e6b7b;letter-spacing:0.023px;">Select Consultation Type</span>
<span class="t" style="left:511.2px;top:165.0px;font-size:8.6px;font-weight:700;color:#fff;">search</span>
</form>
<div role="toolbar" aria-label="Table tools">
<span class="t" style="left:223.9px;top:246.0px;font-size:10.3px;color:#80b0de;letter-spacing:-0.596px;-webkit-text-stroke:0.4px currentColor;">CSV</span>
<span class="t" style="left:277.0px;top:246.0px;font-size:10.3px;color:#80b0de;letter-spacing:-0.298px;-webkit-text-stroke:0.4px currentColor;">Excel</span>
<span class="t" style="left:334.5px;top:246.0px;font-size:10.3px;color:#80b0de;letter-spacing:-0.117px;-webkit-text-stroke:0.4px currentColor;">Print</span>
<span class="t" style="left:388.7px;top:246.0px;font-size:10.3px;color:#80b0de;letter-spacing:-0.241px;-webkit-text-stroke:0.4px currentColor;">Show 10 rows</span>
<span class="t" style="left:1029.7px;top:221.0px;font-size:9.8px;color:#000;letter-spacing:-0.026px;">Choose File</span>
<span class="t" style="left:1090.3px;top:221.0px;font-size:9.8px;color:#6e6b7b;letter-spacing:0.115px;">No file chosen</span>
<span class="t" style="left:1299.2px;top:221.0px;font-size:8.8px;font-weight:700;color:#fff;letter-spacing:-0.129px;">Import</span>
<span class="t d" style="left:1140.5px;top:283.0px;font-size:9.0px;color:#333;letter-spacing:0.078px;-webkit-text-stroke:0.2px currentColor;">Search:</span>
</div>
<div role="row" aria-label="Table header">
<span class="t" style="left:261.0px;top:323.0px;font-size:8.5px;font-weight:700;color:#0e0e14;letter-spacing:0.151px;">ACTION</span>
<span class="t" style="left:367.9px;top:317.0px;font-size:8.5px;font-weight:700;color:#0e0e14;letter-spacing:0.042px;">PATIENT</span>
<span class="t" style="left:367.9px;top:329.0px;font-size:8.5px;font-weight:700;color:#0e0e14;letter-spacing:-0.200px;">ID</span>
<span class="t" style="left:442.5px;top:317.0px;font-size:8.5px;font-weight:700;color:#0e0e14;letter-spacing:0.113px;">PATIENT</span>
<span class="t" style="left:442.5px;top:329.0px;font-size:8.5px;font-weight:700;color:#0e0e14;letter-spacing:0.117px;">NAME</span>
<span class="t" style="left:514.4px;top:317.0px;font-size:8.5px;font-weight:700;color:#0e0e14;letter-spacing:0.183px;">CONTACT</span>
<span class="t" style="left:514.4px;top:329.0px;font-size:8.5px;font-weight:700;color:#0e0e14;letter-spacing:-0.075px;">NO.</span>
<span class="t" style="left:608.0px;top:317.0px;font-size:8.5px;font-weight:700;color:#0e0e14;letter-spacing:0.148px;">APPOINTMENT</span>
<span class="t" style="left:608.0px;top:329.0px;font-size:8.5px;font-weight:700;color:#0e0e14;letter-spacing:-0.418px;">FOR</span>
<span class="t" style="left:706.6px;top:317.0px;font-size:8.5px;font-weight:700;color:#0e0e14;letter-spacing:0.113px;">CONSULTATION</span>
<span class="t" style="left:706.6px;top:329.0px;font-size:8.5px;font-weight:700;color:#0e0e14;">TYPE</span>
<span class="t" style="left:822.6px;top:317.0px;font-size:8.5px;font-weight:700;color:#0e0e14;letter-spacing:0.183px;">ATTENDING</span>
<span class="t" style="left:822.6px;top:329.0px;font-size:8.5px;font-weight:700;color:#0e0e14;letter-spacing:-0.031px;">DOCTOR</span>
<span class="t" style="left:912.0px;top:323.0px;font-size:8.5px;font-weight:700;color:#0e0e14;letter-spacing:0.040px;">SLOT START TIME</span>
<span class="t" style="left:1043.7px;top:323.0px;font-size:8.5px;font-weight:700;color:#0e0e14;letter-spacing:-0.040px;">CREATED AT</span>
<span class="t" style="left:1182.8px;top:323.0px;font-size:8.5px;font-weight:700;color:#0e0e14;letter-spacing:0.142px;">STATUS</span>
<span class="t" style="left:1245.4px;top:323.0px;font-size:8.5px;font-weight:700;color:#0e0e14;letter-spacing:-0.123px;">CREATED BY</span>
</div>
<div role="row">
<span class="t" style="left:368.2px;top:365.0px;font-size:9.5px;font-weight:700;color:#2a8352;letter-spacing:-0.195px;">PIFAF1A3</span>
<span class="t d" style="left:442.7px;top:365.0px;font-size:9.2px;color:#1e1e1e;letter-spacing:0.374px;-webkit-text-stroke:0.25px currentColor;">Ssss</span>
<span class="t d" style="left:514.7px;top:365.0px;font-size:9.2px;color:#1e1e1e;-webkit-text-stroke:0.25px currentColor;">5555555323</span>
<span class="t d" style="left:607.8px;top:365.0px;font-size:9.2px;color:#1e1e1e;letter-spacing:0.095px;-webkit-text-stroke:0.25px currentColor;">Consultation</span>
<span class="t d" style="left:706.7px;top:365.0px;font-size:9.2px;color:#1e1e1e;letter-spacing:0.088px;-webkit-text-stroke:0.25px currentColor;">Clinic Consultation</span>
<span class="t d" style="left:823.0px;top:365.0px;font-size:9.2px;color:#1e1e1e;letter-spacing:0.135px;-webkit-text-stroke:0.25px currentColor;">PNP Hospital</span>
<span class="t d" style="left:912.2px;top:365.0px;font-size:9.2px;color:#1e1e1e;letter-spacing:-0.299px;-webkit-text-stroke:0.25px currentColor;">2025-11-13 10:31:50</span>
<span class="t" style="left:1048.8px;top:366.0px;font-size:8.5px;font-weight:700;color:#1f7446;letter-spacing:-0.018px;">Nov 13th, 2025 10:36 AM</span>
<span class="t" style="left:1250.1px;top:366.0px;font-size:8.5px;font-weight:700;color:#1f7446;letter-spacing:-0.062px;">AD - Muskan</span>
</div>
<div role="row">
<span class="t" style="left:368.2px;top:412.0px;font-size:9.5px;font-weight:700;color:#2a8352;letter-spacing:0.358px;">PI2020E4</span>
<span class="t d" style="left:442.7px;top:412.0px;font-size:9.2px;color:#1e1e1e;letter-spacing:-0.064px;-webkit-text-stroke:0.25px currentColor;">Usman</span>
<span class="t d" style="left:514.7px;top:412.0px;font-size:9.2px;color:#1e1e1e;letter-spacing:-0.267px;-webkit-text-stroke:0.25px currentColor;">2891289127</span>
<span class="t d" style="left:607.8px;top:412.0px;font-size:9.2px;color:#1e1e1e;letter-spacing:0.048px;-webkit-text-stroke:0.25px currentColor;">Therapy</span>
<span class="t d" style="left:706.7px;top:412.0px;font-size:9.2px;color:#1e1e1e;letter-spacing:0.088px;-webkit-text-stroke:0.25px currentColor;">Clinic Consultation</span>
<span class="t d" style="left:823.0px;top:412.0px;font-size:9.2px;color:#1e1e1e;letter-spacing:0.174px;-webkit-text-stroke:0.25px currentColor;">Muskan</span>
<span class="t d" style="left:912.2px;top:412.0px;font-size:9.2px;color:#1e1e1e;letter-spacing:0.054px;-webkit-text-stroke:0.25px currentColor;">2025-11-05 09:30:00</span>
<span class="t" style="left:1048.8px;top:413.0px;font-size:8.5px;font-weight:700;color:#1f7446;">Nov 5th, 2025 05:10 PM</span>
<span class="t" style="left:1250.1px;top:413.0px;font-size:8.5px;font-weight:700;color:#1f7446;letter-spacing:-0.062px;">AD - Muskan</span>
</div>
<div role="row">
<span class="t" style="left:368.2px;top:459.0px;font-size:9.5px;font-weight:700;color:#2a8352;letter-spacing:-0.195px;">PI115961</span>
<span class="t d" style="left:442.7px;top:459.0px;font-size:9.2px;color:#1e1e1e;-webkit-text-stroke:0.25px currentColor;">Anita</span>
<span class="t d" style="left:514.7px;top:459.0px;font-size:9.2px;color:#1e1e1e;letter-spacing:0.017px;-webkit-text-stroke:0.25px currentColor;">89128928933</span>
<span class="t d" style="left:607.8px;top:459.0px;font-size:9.2px;color:#1e1e1e;letter-spacing:0.095px;-webkit-text-stroke:0.25px currentColor;">Consultation</span>
<span class="t d" style="left:706.7px;top:459.0px;font-size:9.2px;color:#1e1e1e;letter-spacing:0.088px;-webkit-text-stroke:0.25px currentColor;">Clinic Consultation</span>
<span class="t d" style="left:823.0px;top:459.0px;font-size:9.2px;color:#1e1e1e;letter-spacing:0.174px;-webkit-text-stroke:0.25px currentColor;">Muskan</span>
<span class="t d" style="left:912.2px;top:459.0px;font-size:9.2px;color:#1e1e1e;letter-spacing:0.117px;-webkit-text-stroke:0.25px currentColor;">2025-10-27 09:20:00</span>
<span class="t" style="left:1048.8px;top:460.0px;font-size:8.5px;font-weight:700;color:#1f7446;letter-spacing:-0.066px;">Nov 1st, 2025 04:31 PM</span>
<span class="t" style="left:1250.1px;top:460.0px;font-size:8.5px;font-weight:700;color:#1f7446;letter-spacing:-0.062px;">AD - Muskan</span>
</div>
<div role="row">
<span class="t" style="left:368.2px;top:506.0px;font-size:9.5px;font-weight:700;color:#2a8352;letter-spacing:-0.007px;">PI2CFC61</span>
<span class="t d" style="left:442.7px;top:506.0px;font-size:9.2px;color:#1e1e1e;letter-spacing:0.259px;-webkit-text-stroke:0.25px currentColor;">Yadnika</span>
<span class="t d" style="left:514.7px;top:506.0px;font-size:9.2px;color:#1e1e1e;letter-spacing:0.177px;-webkit-text-stroke:0.25px currentColor;">893892389</span>
<span class="t d" style="left:607.8px;top:506.0px;font-size:9.2px;color:#1e1e1e;letter-spacing:0.095px;-webkit-text-stroke:0.25px currentColor;">Consultation</span>
<span class="t d" style="left:706.7px;top:506.0px;font-size:9.2px;color:#1e1e1e;letter-spacing:0.088px;-webkit-text-stroke:0.25px currentColor;">Clinic Consultation</span>
<span class="t d" style="left:823.0px;top:506.0px;font-size:9.2px;color:#1e1e1e;letter-spacing:0.174px;-webkit-text-stroke:0.25px currentColor;">Muskan</span>
<span class="t d" style="left:912.2px;top:506.0px;font-size:9.2px;color:#1e1e1e;letter-spacing:-0.041px;-webkit-text-stroke:0.25px currentColor;">2025-08-01 11:20:00</span>
<span class="t" style="left:1048.8px;top:507.0px;font-size:8.5px;font-weight:700;color:#1f7446;letter-spacing:0.045px;">Oct 24th, 2025 12:40 PM</span>
<span class="t" style="left:1250.1px;top:507.0px;font-size:8.5px;font-weight:700;color:#1f7446;letter-spacing:-0.062px;">AD - Muskan</span>
</div>
<div role="row">
<span class="t" style="left:368.2px;top:553.0px;font-size:9.5px;font-weight:700;color:#2a8352;letter-spacing:0.154px;">PI6196C8</span>
<span class="t d" style="left:442.7px;top:553.0px;font-size:9.2px;color:#1e1e1e;letter-spacing:0.298px;-webkit-text-stroke:0.25px currentColor;">YASIR</span>
<span class="t d" style="left:514.7px;top:553.0px;font-size:9.2px;color:#1e1e1e;letter-spacing:0.043px;-webkit-text-stroke:0.25px currentColor;">8237837823</span>
<span class="t d" style="left:607.8px;top:553.0px;font-size:9.2px;color:#1e1e1e;letter-spacing:0.095px;-webkit-text-stroke:0.25px currentColor;">Consultation</span>
<span class="t d" style="left:706.7px;top:553.0px;font-size:9.2px;color:#1e1e1e;letter-spacing:0.088px;-webkit-text-stroke:0.25px currentColor;">Clinic Consultation</span>
<span class="t d" style="left:823.0px;top:553.0px;font-size:9.2px;color:#1e1e1e;letter-spacing:0.174px;-webkit-text-stroke:0.25px currentColor;">Muskan</span>
<span class="t d" style="left:912.2px;top:553.0px;font-size:9.2px;color:#1e1e1e;letter-spacing:0.133px;-webkit-text-stroke:0.25px currentColor;">2025-06-25 12:50:00</span>
<span class="t" style="left:1048.8px;top:554.0px;font-size:8.5px;font-weight:700;color:#1f7446;letter-spacing:-0.095px;">Oct 20th, 2025 12:11 PM</span>
<span class="t" style="left:1250.1px;top:554.0px;font-size:8.5px;font-weight:700;color:#1f7446;letter-spacing:-0.062px;">AD - Muskan</span>
</div>
</div></body></html>
